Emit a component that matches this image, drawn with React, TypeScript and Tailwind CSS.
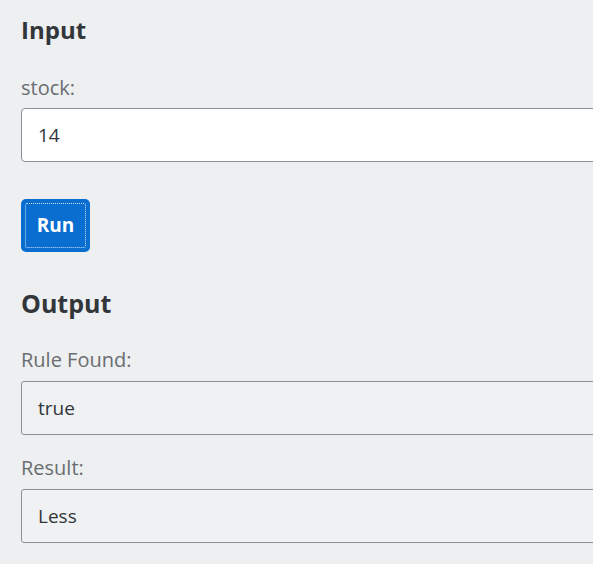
import React from "react";

export default function App() {
  return (
    <main
      className="min-h-screen w-full overflow-hidden bg-[#edeff0] pl-[21px] text-[#32363a]"
      style={{ fontFamily: '"Open Sans", "Noto Sans", Arial, sans-serif' }}
    >
      <h2 className="pt-[14px] text-[24px] font-bold leading-[32px]">Input</h2>

      <label className="mt-[30px] block text-[20px] leading-[24px] text-[#6a6d70]">
        stock:
      </label>
      <input
        readOnly
        value="14"
        className="mt-[8px] block h-[54px] w-[620px] rounded-[4px] border border-[#89919a] bg-white px-[16px] text-[19px] text-[#32363a] outline-none"
      />

      <button className="mt-[37px] flex h-[53px] w-[69px] items-center justify-center rounded-[5px] bg-[#0a6ed1] p-[4px]">
        <span className="flex h-full w-full items-center justify-center rounded-[2px] border border-dotted border-white/80 text-[19px] font-bold text-white">
          Run
        </span>
      </button>

      <h2 className="mt-[35px] text-[25px] font-bold leading-[32px]">Output</h2>

      <label className="mt-[29px] block text-[20px] leading-[24px] text-[#6a6d70]">
        Rule Found:
      </label>
      <div className="mt-[9px] flex h-[54px] w-[620px] items-center rounded-[3px] border border-[#89919a] bg-[#eff1f2] px-[16px] text-[19px]">
        true
      </div>

      <label className="mt-[21px] block text-[20px] leading-[24px] text-[#6a6d70]">
        Result:
      </label>
      <div className="mt-[9px] flex h-[54px] w-[620px] items-center rounded-[3px] border border-[#89919a] bg-[#eff1f2] px-[16px] text-[19px]">
        Less
      </div>
    </main>
  );
}
